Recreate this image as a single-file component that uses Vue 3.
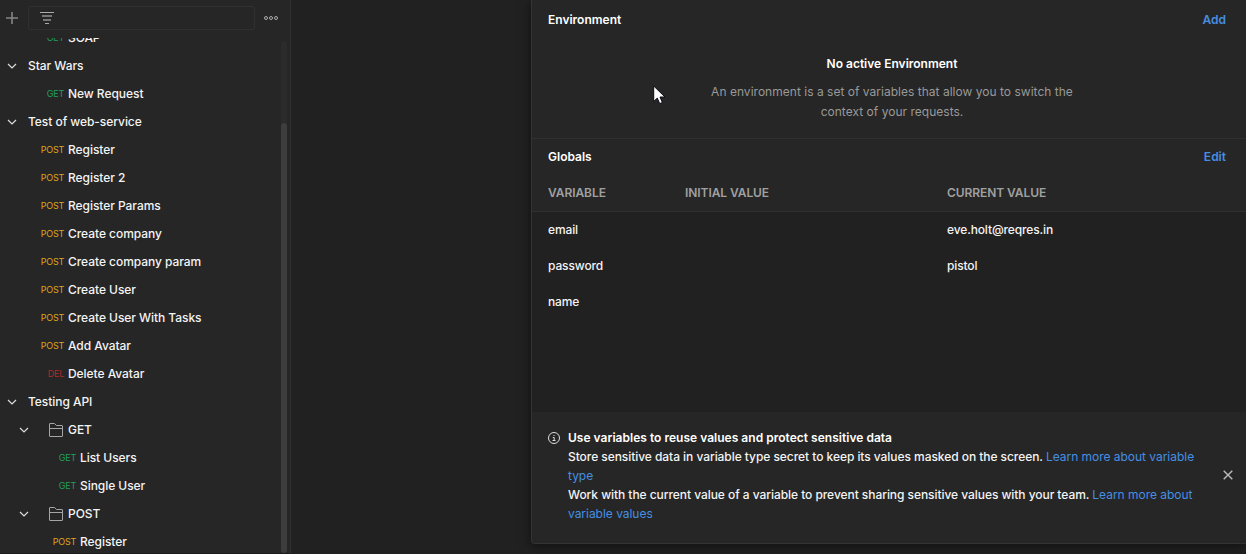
<script setup>
const rows = [
  { kind: 'request', method: 'GET', name: 'SOAP', pad: 64 },
  { kind: 'group', name: 'Star Wars' },
  { kind: 'request', method: 'GET', name: 'New Request', pad: 64 },
  { kind: 'group', name: 'Test of web-service' },
  { kind: 'request', method: 'POST', name: 'Register', pad: 64 },
  { kind: 'request', method: 'POST', name: 'Register 2', pad: 64 },
  { kind: 'request', method: 'POST', name: 'Register Params', pad: 64 },
  { kind: 'request', method: 'POST', name: 'Create company', pad: 64 },
  { kind: 'request', method: 'POST', name: 'Create company param', pad: 64 },
  { kind: 'request', method: 'POST', name: 'Create User', pad: 64 },
  { kind: 'request', method: 'POST', name: 'Create User With Tasks', pad: 64 },
  { kind: 'request', method: 'POST', name: 'Add Avatar', pad: 64 },
  { kind: 'request', method: 'DEL', name: 'Delete Avatar', pad: 64 },
  { kind: 'group', name: 'Testing API' },
  { kind: 'folder', name: 'GET' },
  { kind: 'request', method: 'GET', name: 'List Users', pad: 76 },
  { kind: 'request', method: 'GET', name: 'Single User', pad: 76 },
  { kind: 'folder', name: 'POST' },
  { kind: 'request', method: 'POST', name: 'Register', pad: 76 },
]
const globals = [
  { name: 'email', initial: '', current: 'eve.holt@reqres.in' },
  { name: 'password', initial: '', current: 'pistol' },
  { name: 'name', initial: '', current: '' },
]
</script>

<template>
  <div class="app">
    <aside class="sidebar">
      <header class="toolbar">
        <svg class="plus" width="12" height="12" viewBox="0 0 12 12"><path d="M6 0v12M0 6h12" /></svg>
        <div class="filter">
          <svg width="14" height="12" viewBox="0 0 14 12">
            <path class="bright" d="M0 .5h14" /><path d="M2 4h10M3 8h8" /><path class="bright" d="M5 11.5h4" />
          </svg>
        </div>
        <svg class="more" width="14" height="4" viewBox="0 0 14 4">
          <circle cx="2" cy="2" r="1.5" /><circle cx="7" cy="2" r="1.5" /><circle cx="12" cy="2" r="1.5" />
        </svg>
      </header>
      <div class="tree">
        <div class="list">
          <div v-for="(row, i) in rows" :key="i" class="row" :class="row.kind">
            <template v-if="row.kind === 'request'">
              <span class="method" :class="row.method.toLowerCase()" :style="{ width: row.pad + 'px' }">{{ row.method }}</span>
            </template>
            <template v-else>
              <svg class="chevron" width="10" height="6" viewBox="0 0 10 6"><path d="M1 1l4 4 4-4" /></svg>
              <svg v-if="row.kind === 'folder'" class="folder-icon" width="14" height="14" viewBox="0 0 14 14">
                <path d="M.5 13V1Q.5.5 1 .5H5.5L7.5 2.5H13q.5 0 .5.5V13q0 .5-.5.5H1Q.5 13.500.5 13zM.5 5.500H13.500" />
              </svg>
            </template>
            <span class="label">{{ row.name }}</span>
          </div>
        </div>
        <div class="track"><div class="thumb"></div></div>
      </div>
    </aside>

    <main class="workspace">
      <section class="panel">
        <div class="environment">
          <div class="heading"><b>Environment</b><a>Add</a></div>
          <div class="empty">
            <b>No active Environment</b>
            <p>An environment is a set of variables that allow you to switch the context of your requests.</p>
          </div>
        </div>
        <div class="globals">
          <div class="heading"><b>Globals</b><a>Edit</a></div>
          <div class="cells columns"><span>VARIABLE</span><span>INITIAL VALUE</span><span>CURRENT VALUE</span></div>
        </div>
        <div class="values">
          <div v-for="g in globals" :key="g.name" class="cells entry">
            <span>{{ g.name }}</span><span>{{ g.initial }}</span><span>{{ g.current }}</span>
          </div>
        </div>
        <div class="notice">
          <svg class="info" width="12" height="12" viewBox="0 0 12 12">
            <circle cx="6" cy="6" r="5.500" /><path d="M4.800 5.500H6.200V8.500M4.500 8.500h3M5.500 3.500h1" />
          </svg>
          <div class="message">
            <b>Use variables to reuse values and protect sensitive data</b>
            <p>Store sensitive data in variable type secret to keep its values masked on the screen. <a>Learn more about variable<br />type</a></p>
            <p>Work with the current value of a variable to prevent sharing sensitive values with your team. <a>Learn more about<br />variable values</a></p>
          </div>
          <svg class="close" width="10" height="10" viewBox="0 0 10 10"><path d="M.7.7l8.600 8.600M9.300.7L.7 9.300" /></svg>
        </div>
      </section>
    </main>

    <svg class="cursor" width="13" height="20" viewBox="0 0 13 20">
      <path d="M.7 1v15.500l3.600-3.400 2.400 5.500 2.700-1.100L7 12h5z" />
    </svg>
  </div>
</template>

<style>
body {
  background: #212121;
}
</style>

<style scoped>
.app {
  position: relative;
  display: flex;
  width: 100%;
  height: 554px;
  overflow: hidden;
  background: #212121;
  color: #f4f4f4;
  font: 500 12px/20px Inter, "Liberation Sans", sans-serif;
}
b {
  font-weight: 600;
  color: #fff;
}
p {
  margin: 0;
}
svg {
  display: block;
  flex: none;
  fill: none;
  stroke-width: 1;
}
a {
  color: #458fe3;
}
.sidebar {
  display: flex;
  flex-direction: column;
  flex: none;
  box-sizing: border-box;
  width: 291px;
  border-right: 1px solid #303030;
  border-bottom: 1px solid #1c1c1c;
  background: #262626;
}
.toolbar {
  display: flex;
  align-items: center;
  flex: none;
  height: 32px;
  padding: 2px 0 4px 6px;
}
.plus {
  stroke: #858585;
  stroke-width: 1.600;
}
.filter {
  display: flex;
  align-items: center;
  box-sizing: border-box;
  width: 227px;
  height: 24px;
  margin: 0 9px 0 10px;
  padding-left: 11px;
  border: 1px solid #303030;
  border-radius: 2px;
}
.filter svg {
  stroke: #777;
  stroke-width: 2;
}
.filter .bright {
  stroke: #aaa;
  stroke-width: 1;
}
.more {
  stroke: #aaa;
}
.tree {
  display: flex;
  flex: 1;
  min-height: 0;
  overflow: hidden;
}
.list {
  flex: 1;
  margin-top: -14px;
}
.row {
  display: flex;
  align-items: center;
  height: 28px;
}
.label {
  margin-left: 4px;
  letter-spacing: -0.05px;
  white-space: nowrap;
}
.method {
  font-size: 9px;
  font-weight: 400;
  letter-spacing: -0.25px;
  text-align: right;
}
.get { color: #22a05a; }
.post { color: #dfa51b; }
.del { color: #b02a2a; }
.chevron {
  margin-left: 7px;
  stroke: #ddd;
  stroke-width: 1.200;
}
.group .label {
  margin-left: 11px;
}
.folder .chevron {
  margin-left: 19px;
}
.folder-icon {
  margin-left: 20px;
  stroke: #a6a6a6;
}
.folder .label {
  margin-left: 5px;
}
.track {
  flex: none;
  width: 6px;
  margin: 3px 3px 0 0;
  border-radius: 3px;
  background: #2b2b2b;
}
.thumb {
  height: 430px;
  margin-top: 82px;
  border-radius: 3px;
  background: #3d3d3d;
}
.workspace {
  flex: 1;
  padding-left: 240px;
}
.panel {
  display: flex;
  flex-direction: column;
  box-sizing: border-box;
  height: 544px;
  border: solid #333;
  border-width: 0 0 1px 1px;
  border-bottom-left-radius: 4px;
  background: #212121;
  box-shadow: 0 2px 12px rgba(0, 0, 0, 0.55);
  overflow: hidden;
}
.environment,
.globals {
  box-sizing: border-box;
  border-bottom: 1px solid #303030;
  background: #262626;
}
.environment {
  height: 139px;
}
.globals {
  height: 73px;
}
.heading {
  display: flex;
  justify-content: space-between;
  padding: 10px 20px 0 16px;
}
.globals .heading {
  padding-top: 8px;
}
.heading a {
  font-weight: 600;
}
.empty {
  width: 380px;
  margin: 24px auto 0;
  text-align: center;
  transform: translateX(3px);
}
.empty p {
  margin-top: 8px;
  color: #999;
  font-weight: 400;
  letter-spacing: 0.02px;
}
.cells {
  display: grid;
  grid-template-columns: 137px 262px 1fr;
  align-items: center;
  height: 36px;
  padding-left: 16px;
}
.columns {
  height: 52px;
  color: #a0a0a0;
  font-weight: 600;
  letter-spacing: -0.07px;
}
.entry {
  letter-spacing: -0.13px;
}
.values {
  flex: 1;
}
.notice {
  display: flex;
  align-items: flex-start;
  box-sizing: border-box;
  height: 131px;
  padding: 16px 13px 0 16px;
  background: #262626;
  line-height: 19px;
}
.info {
  margin-top: 4px;
  stroke: #ddd;
}
.message {
  flex: 1;
  margin-left: 8px;
  white-space: nowrap;
}
.message b {
  letter-spacing: 0.02px;
}
.message p {
  letter-spacing: -0.055px;
}
.message a {
  font-weight: 400;
  letter-spacing: -0.03px;
}
.close {
  margin-top: 42px;
  stroke: #bbb;
  stroke-width: 1.400;
}
.cursor {
  position: absolute;
  left: 653px;
  top: 85px;
  fill: #fff;
  stroke: #0a0a18;
}
</style>
